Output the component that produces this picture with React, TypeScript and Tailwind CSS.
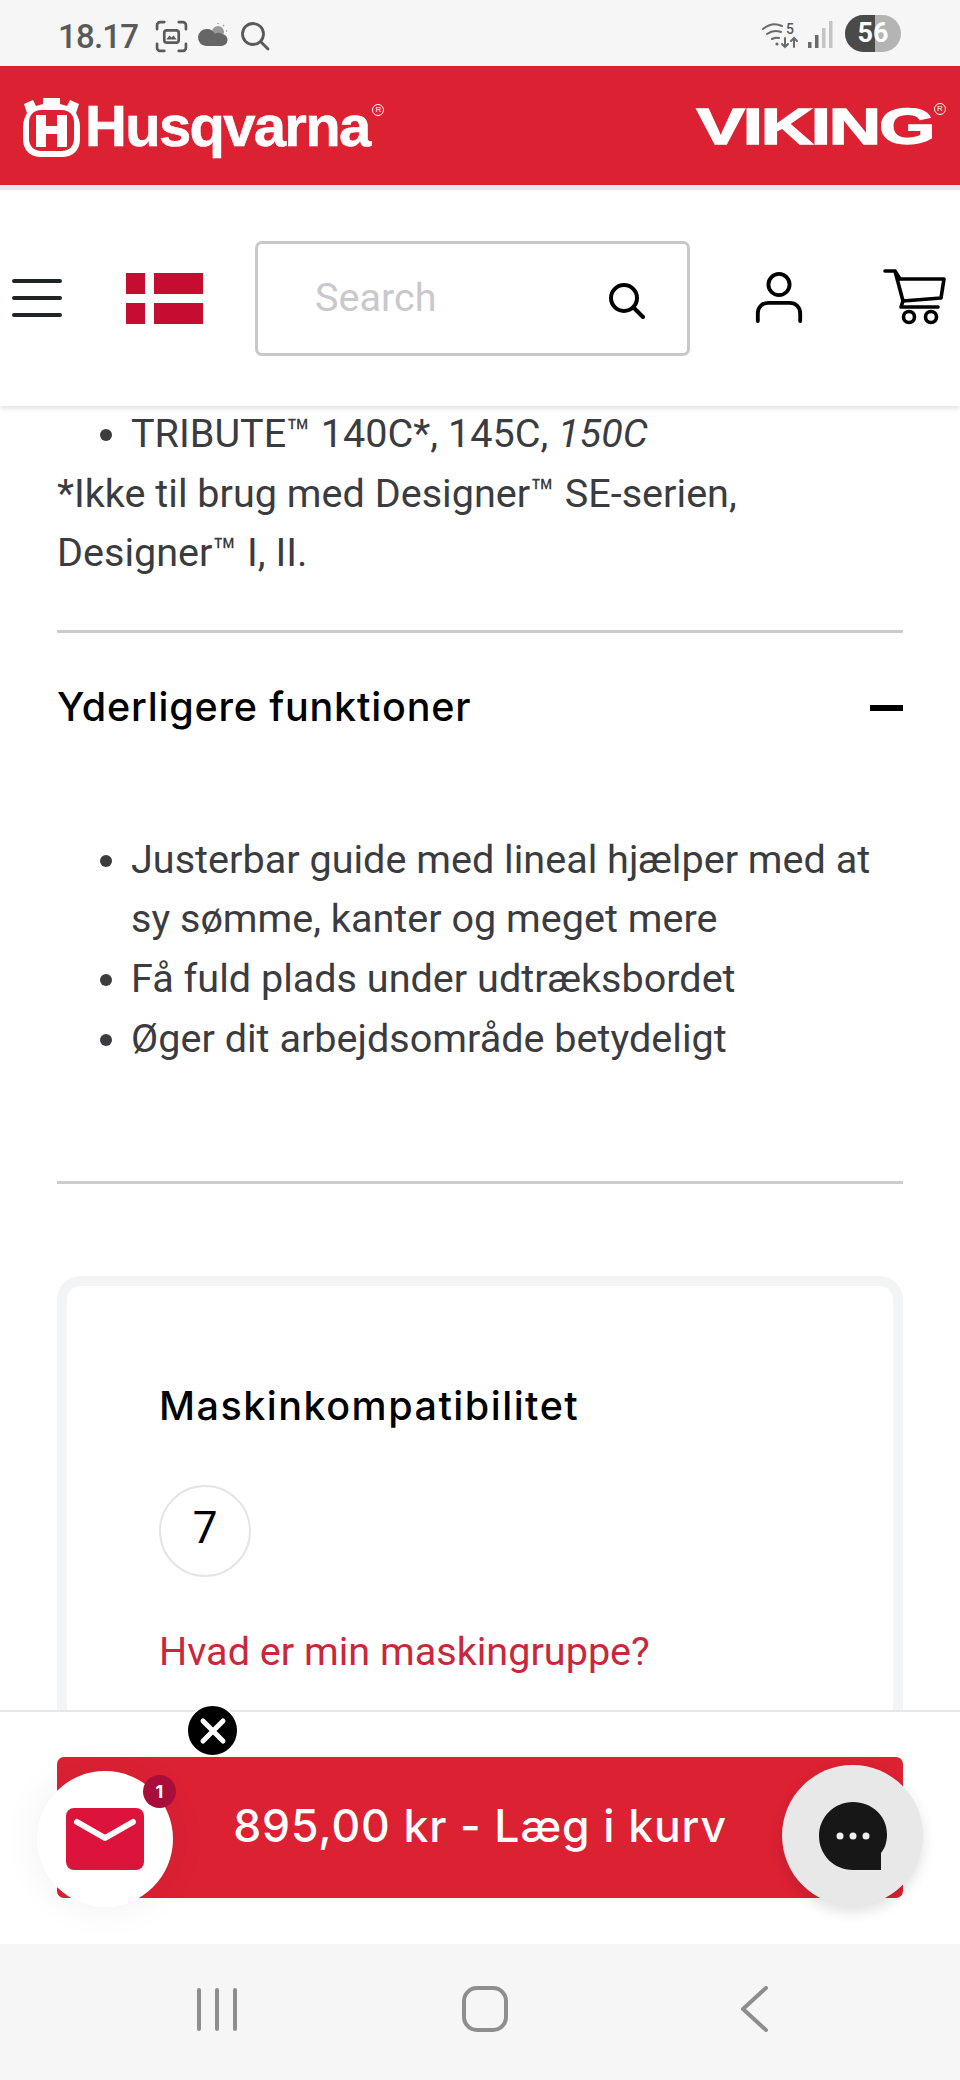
import React from "react";

const poppins = "font-['Inter','Noto_Sans',sans-serif]";

function StatusBar() {
  return (
    <div className="h-[66px] shrink-0 bg-[#f6f6f6] flex items-center pl-[58px] pr-[59px] pt-[6px] text-[#5a5a5a]">
      <span className="text-[33px] font-medium leading-none font-['Roboto',sans-serif] tracking-[-0.8px]">18.17</span>
      <svg className="ml-[17px]" width="33" height="33" viewBox="0 0 32 32" fill="none" stroke="#5a5a5a" strokeWidth="2.6" strokeLinecap="round">
        <path d="M2 9V5a3 3 0 0 1 3-3h4M23 2h4a3 3 0 0 1 3 3v4M30 23v4a3 3 0 0 1-3 3h-4M9 30H5a3 3 0 0 1-3-3v-4" />
        <rect x="9" y="10" width="14" height="12" rx="2.5" />
        <path d="M11 19l3-4 2 2 2-2 3 4z" fill="#5a5a5a" stroke="none" />
      </svg>
      <svg className="ml-[9px]" width="32" height="28" viewBox="0 0 32 28">
        <circle cx="21" cy="10" r="6" fill="#9a9a9a" />
        <path d="M21 1v1M27 3l-1 1M30 9h-1" stroke="#9a9a9a" strokeWidth="1.4" />
        <path d="M10 7a9 9 0 0 1 8 5 6 6 0 0 1 7 0 5.5 5.5 0 0 1-1 12H9A8.500 8.500 0 0 1 10 7z" fill="#666666" />
      </svg>
      <svg className="ml-[11px]" width="30" height="30" viewBox="0 0 30 30" fill="none" stroke="#5a5a5a" strokeWidth="2.8" strokeLinecap="round">
        <circle cx="13" cy="13" r="10.500" />
        <path d="M21 21l7 7" />
      </svg>
      <div className="ml-auto flex items-center mt-[-5px]">
        <svg width="38" height="28" viewBox="0 0 38 28" fill="none" stroke="#6a6a6a" strokeWidth="2" strokeLinecap="round" className="mt-[2px]">
          <path d="M1 8c6-5 13-6 19-3M5 13c4-3 9-4 14-2M10 18c2-1 4-2 7-1" />
          <circle cx="15" cy="23" r="1.600" fill="#6a6a6a" stroke="none" />
          <path d="M23 17v9M20 23l3 3 3-3M32 26v-9M29 20l3-3 3 3" />
          <text x="24" y="13" fontSize="14" fill="#5a5a5a" stroke="none" fontFamily="Roboto" fontWeight="500">5</text>
        </svg>
        <svg className="ml-[8px] mt-[2px]" width="26" height="28" viewBox="0 0 26 28">
          <rect x="0" y="21" width="3.500" height="6" fill="#6a6a6a" />
          <rect x="7" y="14" width="3.500" height="13" fill="#6a6a6a" />
          <rect x="14" y="7" width="3.500" height="20" fill="#c4c4c4" />
          <rect x="21" y="0" width="3.500" height="27" fill="#c4c4c4" />
        </svg>
        <div className="ml-[11px] relative w-[56px] h-[37px] rounded-full overflow-hidden bg-[#b4b4b4] flex">
          <div className="w-[30px] bg-[#4a4a4a]" />
          <span className="absolute inset-0 flex items-center justify-center text-white text-[27px] font-bold font-['Roboto',sans-serif] leading-none">56</span>
        </div>
      </div>
    </div>
  );
}

function BrandBar() {
  return (
    <div className="h-[119px] shrink-0 bg-[#dc2133] flex items-center justify-between pl-[23px] pr-[14px] text-white font-['Liberation_Sans',sans-serif]">
      <div className="flex items-center">
        <svg width="57" height="60" viewBox="0 0 57 60" className="mt-[2px]">
          <path fill="#fff" d="M1 7l9-4 3 6 7-2V1h17v6l7 2 3-6 9 4-3 9c2 4 4 8 4 14v12c0 11-7 18-18 18H18C7 60 0 53 0 42V30c0-6 2-10 4-14z" />
          <path fill="#dc2133" d="M18 13h21c7 0 12 5 12 12v17c0 7-5 12-12 12H18C11 54 6 49 6 42V25c0-7 5-12 12-12z" />
          <path fill="#fff" d="M13 18h10v11h11V18h10v32H34V37H23v13H13z" />
        </svg>
        <span className="ml-[5px] text-[58px] leading-none font-bold tracking-[-1.7px] [-webkit-text-stroke:0.6px_white]">Husqvarna</span>
        <span className="self-start mt-[9px] ml-[3px] text-[12px] leading-none border border-white rounded-full w-[12px] h-[12px] flex items-center justify-center">
          <span className="text-[8px]">R</span>
        </span>
      </div>
      <div className="flex items-start">
        <span className="text-[50px] leading-none font-bold scale-x-[1.45] origin-right [-webkit-text-stroke:1.4px_white] tracking-[-1.5px] mt-[2px]">VIKING</span>
        <span className="mt-[3px] ml-[1px] text-[12px] leading-none border border-white rounded-full w-[12px] h-[12px] flex items-center justify-center">
          <span className="text-[8px]">R</span>
        </span>
      </div>
    </div>
  );
}

function NavBar() {
  return (
    <div className="relative z-10 h-[221px] shrink-0 bg-white border-t-[5px] border-[#e8e8ea] shadow-[0_3px_4px_rgba(0,0,0,0.1)] flex items-center pl-[12px]">
      <div className="w-[50px] flex flex-col gap-[13px]">
        <div className="h-[4px] rounded-full bg-[#1f2426]" />
        <div className="h-[4px] rounded-full bg-[#1f2426]" />
        <div className="h-[4px] rounded-full bg-[#1f2426]" />
      </div>
      <svg className="ml-[64px] mt-[1px]" width="77" height="51" viewBox="0 0 77 51">
        <rect width="77" height="51" fill="#c60c30" />
        <rect x="19" width="9" height="51" fill="#fff" />
        <rect y="21" width="77" height="9" fill="#fff" />
      </svg>
      <div className="ml-[52px] w-[435px] h-[115px] border-[3px] border-[#c8c8c8] rounded-[7px] flex items-center justify-between pl-[57px] pr-[42px]">
        <span className="text-[39.6px] leading-none text-[#c9c9cd] font-['Roboto',sans-serif]">Search</span>
        <svg width="36" height="36" viewBox="0 0 36 36" fill="none" stroke="#000" strokeWidth="4" strokeLinecap="round" className="mt-[6px]">
          <circle cx="15" cy="15" r="13" />
          <path d="M25 25l9 9" />
        </svg>
      </div>
      <svg className="ml-[65px]" width="48" height="52" viewBox="0 0 48 54" fill="none" stroke="#000" strokeWidth="4" strokeLinecap="round">
        <circle cx="24" cy="13" r="11" />
        <path d="M2 51v-8c0-7 5-11 11-11h22c6 0 11 4 11 11v8" />
      </svg>
      <svg className="ml-[80px] mt-[-2px]" width="63" height="56" viewBox="0 0 63 56" fill="none" stroke="#000" strokeWidth="3.600" strokeLinecap="round" strokeLinejoin="round">
        <path d="M2 2h10l5 8h44l-3 19-38 3L12 2" />
        <path d="M20 32l-2 6h37" />
        <circle cx="26" cy="48" r="5.500" />
        <circle cx="48" cy="48" r="5.500" />
      </svg>
    </div>
  );
}

function Content() {
  return (
    <div className="flex-1 min-h-0 overflow-hidden bg-white px-[57px] pt-0 mt-[-2px] text-[39.6px] leading-[59.6px] text-[#3a3c3f] font-['Roboto',sans-serif]">
      <ul className="list-disc pl-[74px]">
        <li>
          TRIBUTE™ 140C*, 145C, <em>150C</em>
        </li>
      </ul>
      <p>*Ikke til brug med Designer™ SE-serien,</p>
      <p>Designer™ I, II.</p>
      <div className="mt-[47px] border-t-[3px] border-[#cccccc] h-[153px] flex items-center justify-between">
        <span className={`text-[39.5px] font-medium text-black tracking-[0.8px] ${poppins}`}>Yderligere funktioner</span>
        <div className="w-[33px] h-[6px] bg-black" />
      </div>
      <ul className="mt-[47px] list-disc pl-[74px] mb-[113px]">
        <li>Justerbar guide med lineal hjælper med at sy sømme, kanter og meget mere</li>
        <li>Få fuld plads under udtræksbordet</li>
        <li>Øger dit arbejdsområde betydeligt</li>
      </ul>
      <div className="border-t-[3px] border-[#cccccc]" />
      <div className="mt-[92px] h-[600px] border-[10px] border-[#f3f4f6] rounded-[24px] pl-[92px] pt-[90px]">
        <h3 className={`text-[39.5px] leading-[60px] font-medium text-black tracking-[1.5px] ${poppins}`}>Maskinkompatibilitet</h3>
        <div className="mt-[49px] w-[92px] h-[92px] rounded-full border-[2px] border-[#e5e5e5] flex items-center justify-center text-[44px] text-black mb-[45px] pb-[4px]">7</div>
        <a className="text-[39.6px] text-[#c8283c]">Hvad er min maskingruppe?</a>
      </div>
    </div>
  );
}

function CheckoutBar() {
  return (
    <div className="relative h-[234px] shrink-0 bg-white border-t-[2px] border-[#e6e7ea] px-[57px] pt-[45px]">
      <button className={`w-full h-[141px] bg-[#dc2133] rounded-[7px] text-white text-[44.500px] font-medium flex items-center justify-center tracking-[0.9px] pb-[2px] ${poppins}`}>
        895,00 kr - Læg i kurv
      </button>
      <div className="absolute left-[186px] top-[-8px] w-[53px] h-[53px] rounded-full bg-black border-[2px] border-white flex items-center justify-center">
        <svg width="30" height="30" viewBox="0 0 30 30" stroke="#fff" strokeWidth="5" strokeLinecap="round">
          <path d="M5 5l20 20M25 5L5 25" />
        </svg>
      </div>
      <div className="absolute left-[37px] top-[59px] w-[136px] h-[136px] rounded-full bg-white shadow-[0_0_40px_rgba(0,0,0,0.06)] flex items-center justify-center">
        <svg width="78" height="62" viewBox="0 0 78 62">
          <rect width="78" height="62" rx="8" fill="#dc143c" />
          <path d="M11 14l28 16 28-16" fill="none" stroke="#fff" strokeWidth="6" strokeLinecap="round" strokeLinejoin="round" />
        </svg>
        <span className="absolute right-[-3px] top-[4px] w-[33px] h-[33px] rounded-full bg-[#a80d3c] text-white text-[18px] font-bold flex items-center justify-center font-['Inter',sans-serif]">1</span>
      </div>
      <div className="absolute left-[782px] top-[53px] w-[141px] h-[141px] rounded-full bg-[#e8e8e8] shadow-[0_6px_14px_rgba(0,0,0,0.12)] flex items-center justify-center">
        <svg width="68" height="68" viewBox="0 0 68 68">
          <path d="M34 0c19 0 34 14 34 32 0 8-2 14-6 19v17H34C15 68 0 53 0 34S15 0 34 0z" fill="#171717" />
          <circle cx="21" cy="34" r="3.500" fill="#eee" />
          <circle cx="34" cy="34" r="3.500" fill="#eee" />
          <circle cx="47" cy="34" r="3.500" fill="#eee" />
        </svg>
      </div>
    </div>
  );
}

function SystemNav() {
  return (
    <div className="h-[136px] shrink-0 bg-[#f6f6f6] flex items-start pt-[42px] pl-[197px]">
      <div className="flex gap-[14px] mt-[2px]">
        <div className="w-[4px] h-[43px] rounded-full bg-[#8e8e8e]" />
        <div className="w-[4px] h-[43px] rounded-full bg-[#8e8e8e]" />
        <div className="w-[4px] h-[43px] rounded-full bg-[#8e8e8e]" />
      </div>
      <div className="ml-[225px] w-[46px] h-[46px] rounded-[15px] border-[4px] border-[#8e8e8e]" />
      <svg className="ml-[232px]" width="28" height="46" viewBox="0 0 28 46" fill="none" stroke="#8e8e8e" strokeWidth="4" strokeLinecap="round" strokeLinejoin="round">
        <path d="M26 2L3 23l23 21" />
      </svg>
    </div>
  );
}

export default function App() {
  return (
    <div className="w-[960px] h-[2080px] overflow-hidden flex flex-col bg-white">
      <StatusBar />
      <BrandBar />
      <NavBar />
      <Content />
      <CheckoutBar />
      <SystemNav />
    </div>
  );
}
